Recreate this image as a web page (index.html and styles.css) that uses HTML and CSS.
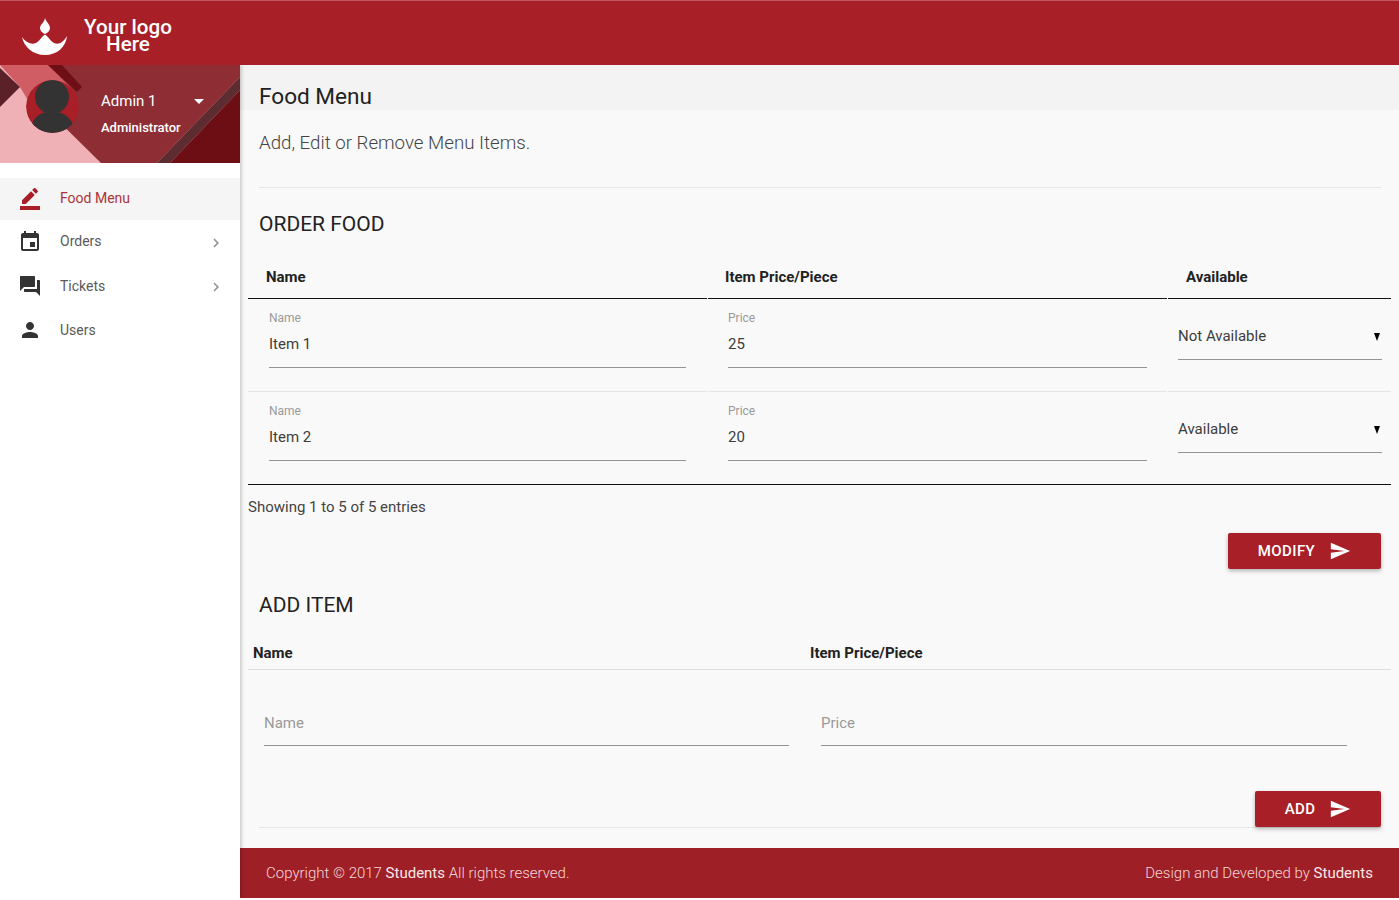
FILE: index.html
```html
<!DOCTYPE html>
<html lang="en">
<head>
<meta charset="utf-8">
<title>Food Menu</title>
<link rel="stylesheet" href="styles.css">
</head>
<body>
<div class="app">
  <header class="topbar">
    <svg class="logo-mark" viewBox="0 0 46 40" width="46" height="40" aria-hidden="true">
      <path class="logo-fill" d="M23 1.5C23 5 28 8 28 12C28 15 25.5 17 23 18C20.5 17 18 15 18 12C18 8.5 23 6 23 1.5z"/>
      <path class="logo-fill" d="M0 21C4 27 10 29 14 27C18 25 20 20 23 18.5C26 20 28 25 32 27C36 29 41 27 45 20C44 31 35 39 23 39C11 39 2 31 0 21z"/>
    </svg>
    <div class="logo-text">Your logo<br>Here</div>
  </header>
  <div class="body-row">
    <aside class="sidebar">
      <div class="profile">
        <svg class="profile-bg" viewBox="0 0 240 98" width="240" height="98" aria-hidden="true">
          <rect class="bg-pink" width="240" height="98"/>
          <polygon class="bg-dark" points="48,0 240,0 240,12 157,98 101,98 30,28"/>
          <polygon class="bg-salmon" points="0,0 48,0 70,22 34,48 26,32 20,22"/>
          <polygon class="bg-brown" points="0,3 20,22 0,42"/>
          <polygon class="bg-stripe" points="48,0 62,0 82,22 77,27"/>
          <polygon class="bg-brown2" points="240,12 157,98 170,98 240,25"/>
          <polygon class="bg-deep" points="240,25 170,98 240,98"/>
        </svg>
        <div class="avatar">
          <svg viewBox="0 0 53 53" width="53" height="53" aria-hidden="true">
            <circle class="av-bg" cx="26.5" cy="26.5" r="26.5"/>
            <ellipse class="av-fg" cx="26" cy="17" rx="17" ry="17"/>
            <path class="av-fg" d="M6 44C9 36 17 31 26 31S43 36 47 44C42 50 34 53 26 53S11 50 6 44z"/>
          </svg>
        </div>
        <div class="who">
          <div class="who-name"><span>Admin 1</span><span class="caret"></span></div>
          <div class="who-role">Administrator</div>
        </div>
      </div>
      <nav class="nav">
        <a class="nav-item active">
          <svg class="ico" viewBox="0 0 24 24"><path d="M22 24H2v-4h20v4zM13.06 5.19l3.75 3.75L7.75 18H4v-3.75l9.06-9.06zm4.82 2.68-3.75-3.75 1.83-1.83c.39-.39 1.02-.39 1.41 0l2.34 2.34c.39.39.39 1.02 0 1.41l-1.83 1.83z"/></svg>
          <span>Food Menu</span>
        </a>
        <a class="nav-item">
          <svg class="ico" viewBox="0 0 24 24"><path d="M17 12h-5v5h5v-5zM16 1v2H8V1H6v2H5c-1.11 0-1.99.9-1.99 2L3 19c0 1.1.89 2 2 2h14c1.1 0 2-.9 2-2V5c0-1.1-.9-2-2-2h-1V1h-2zm3 18H5V8h14v11z"/></svg>
          <span>Orders</span>
          <svg class="chev" viewBox="0 0 24 24"><path d="M10 6L8.59 7.41 13.17 12l-4.58 4.59L10 18l6-6z"/></svg>
        </a>
        <a class="nav-item">
          <svg class="ico" viewBox="0 0 24 24"><path d="M21 6h-2v9H6v2c0 .55.45 1 1 1h11l4 4V7c0-.55-.45-1-1-1zm-4 6V3c0-.55-.45-1-1-1H3c-.55 0-1 .45-1 1v14l4-4h10c.55 0 1-.45 1-1z"/></svg>
          <span>Tickets</span>
          <svg class="chev" viewBox="0 0 24 24"><path d="M10 6L8.59 7.41 13.17 12l-4.58 4.59L10 18l6-6z"/></svg>
        </a>
        <a class="nav-item">
          <svg class="ico" viewBox="0 0 24 24"><path d="M12 12c2.21 0 4-1.79 4-4s-1.79-4-4-4-4 1.79-4 4 1.79 4 4 4zm0 2c-2.67 0-8 1.34-8 4v2h16v-2c0-2.66-5.33-4-8-4z"/></svg>
          <span>Users</span>
        </a>
      </nav>
    </aside>
    <main class="main">
      <div class="page-title">Food Menu</div>
      <div class="content">
        <p class="subtitle">Add, Edit or Remove Menu Items.</p>
        <h2 class="section-title first">ORDER FOOD</h2>

        <div class="order-table">
          <div class="th col-a">Name</div>
          <div class="th col-b">Item Price/Piece</div>
          <div class="th col-c">Available</div>

          <div class="td">
            <div class="field field-wide"><label>Name</label><div class="val">Item 1</div></div>
          </div>
          <div class="td">
            <div class="field field-mid"><label>Price</label><div class="val">25</div></div>
          </div>
          <div class="td">
            <div class="pick"><span>Not Available</span><span class="tri"></span></div>
          </div>

          <div class="td last">
            <div class="field field-wide"><label>Name</label><div class="val">Item 2</div></div>
          </div>
          <div class="td last">
            <div class="field field-mid"><label>Price</label><div class="val">20</div></div>
          </div>
          <div class="td last">
            <div class="pick"><span>Available</span><span class="tri"></span></div>
          </div>
        </div>

        <div class="entries">Showing 1 to 5 of 5 entries</div>
        <div class="actions modify-row">
          <button class="btn btn-modify">MODIFY
            <svg viewBox="0 0 24 24"><path d="M2.01 21L23 12 2.01 3 2 10l15 2-15 2z"/></svg>
          </button>
        </div>

        <h2 class="section-title second">ADD ITEM</h2>
        <div class="add-head">
          <div class="add-th">Name</div>
          <div class="add-th">Item Price/Piece</div>
        </div>
        <div class="add-row">
          <div class="ph ph-a">Name</div>
          <div class="ph ph-b">Price</div>
        </div>
        <div class="actions add-actions">
          <button class="btn btn-add">ADD
            <svg viewBox="0 0 24 24"><path d="M2.01 21L23 12 2.01 3 2 10l15 2-15 2z"/></svg>
          </button>
        </div>
      </div>
      <footer class="footer">
        <div>Copyright © 2017 <b>Students</b> All rights reserved.</div>
        <div>Design and Developed by <b>Students</b></div>
      </footer>
    </main>
  </div>
</div>
</body>
</html>
```
FILE: styles.css
```css
* { box-sizing: border-box; }
html, body { margin: 0; height: 100%; background: #fff; }
body { font-family: Roboto, "Liberation Sans", sans-serif; color: #333; overflow: hidden; }
.app { height: 898px; display: flex; flex-direction: column; }

.topbar {
  height: 65px; flex: none; background: #a81f27; border-top: 1px solid #b9585d;
  display: flex; align-items: flex-start; position: relative; z-index: 3;
}
.logo-mark { margin: 15px 0 0 22px; flex: none; }
.logo-fill { fill: #fff; }
.logo-text {
  margin: 18px 0 0 16px; width: 88px; text-align: center; color: #fff;
  font-size: 20.6px; font-weight: 500; line-height: 17px; white-space: nowrap;
}

.body-row { flex: 1; display: flex; min-height: 0; }

.sidebar {
  width: 240px; flex: none; background: #fff; box-shadow: 1px 0 4px rgba(0,0,0,.25);
  clip-path: inset(0 -8px 0 0);
  position: relative; z-index: 2;
}
.profile { height: 98px; display: flex; position: relative; overflow: hidden; }
.profile-bg { position: absolute; left: 0; top: 0; }
.bg-pink { fill: #efb1b5; }
.bg-salmon { fill: #cf5d63; }
.bg-dark { fill: #8f2d35; }
.bg-brown { fill: #5a2228; }
.bg-stripe { fill: #6e0f15; }
.bg-brown2 { fill: #5c2c31; }
.bg-deep { fill: #6c0e13; }
.avatar { position: relative; margin: 15px 0 0 26px; width: 53px; height: 53px; border-radius: 50%; overflow: hidden; }
.avatar svg { display: block; }
.av-bg { fill: #a81f27; }
.av-fg { fill: #333; }
.who { position: relative; margin-left: 22px; width: 103px; color: #fff; }
.who-name {
  margin-top: 26px; height: 20px; display: flex; justify-content: space-between; align-items: center;
  font-size: 15px; font-weight: 400; line-height: 20px;
}
.caret { width: 0; height: 0; border: 5.5px solid transparent; border-top: 5.5px solid #fff; border-bottom: 0; }
.who-role { margin-top: 9px; font-size: 13px; font-weight: 500; line-height: 16px; white-space: nowrap; }

.nav { margin-top: 15px; }
.nav-item {
  height: 44px; display: flex; align-items: center; padding: 0 15px 0 18px;
  font-size: 14px; color: #5a5a5a; position: relative;
}
.nav-item span { margin-left: 18px; flex: 1; }
.nav-item.active { height: 42px; background: #f5f5f5; color: #ad333a; }
.nav-item.active span, .nav-item:nth-child(2) span { position: relative; top: -1px; }
.nav-item.active .ico { position: relative; top: -1px; }
.ico { width: 24px; height: 24px; fill: #333; flex: none; }
.active .ico { fill: #a81f27; }
.chev { width: 18px; height: 18px; fill: #909090; flex: none; position: relative; top: 1px; }

.main { flex: 1; min-width: 0; display: flex; flex-direction: column; background: #f9f9f9; }
.page-title {
  height: 45px; flex: none; background: #f3f3f3; padding: 18px 0 0 19px;
  font-size: 22.6px; line-height: 28px; color: #222;
}
.content { flex: 1; padding: 0 8px 0 8px; position: relative; }
.subtitle {
  margin: 0 10px 0 11px; padding-top: 22px; height: 78px; border-bottom: 1px solid #e6e6e6;
  font-size: 18.7px; font-weight: 300; line-height: 22px; color: #444;
}
.section-title { margin: 0 0 0 11px; font-size: 21px; font-weight: 400; line-height: 26px; color: #222; }
.section-title.first { padding-top: 23px; height: 50px; }

.order-table { display: grid; grid-template-columns: 459px 459px 223px; column-gap: 1px; margin-top: 24px; }
.th {
  height: 37px; padding-top: 6px; border-bottom: 1px solid #111;
  font-size: 15px; font-weight: 700; line-height: 18px; color: #222;
}
.col-a { padding-left: 18px; }
.col-b { padding-left: 17px; }
.col-c { padding-left: 18px; }
.td { height: 93px; border-bottom: 1px solid #e5e5e5; }
.td.last { height: 92px; border-bottom: 0; }
.field { margin: 12px 0 0 21px; height: 57px; border-bottom: 1px solid #949494; }
.field-wide { width: 417px; }
.field-mid { width: 419px; margin-left: 20px; }
.field label { display: block; font-size: 12px; line-height: 14px; color: #9a9a9a; }
.val { margin-top: 10px; font-size: 15px; line-height: 18px; color: #3d3d3d; }
.pick {
  margin: 19px 9px 0 10px; height: 42px; padding: 9px 2px 0 0; border-bottom: 1px solid #949494;
  display: flex; justify-content: space-between; font-size: 15px; line-height: 18px; color: #3d3d3d;
}
.tri {
  width: 0; height: 0; margin-top: 6px; border-style: solid; border-color: #000 transparent transparent;
  border-width: 8px 3.5px 0;
}

.entries { border-top: 1px solid #111; padding-top: 13px; font-size: 15px; line-height: 18px; color: #444; }
.actions { display: flex; justify-content: flex-end; padding-right: 10px; }
.modify-row { margin-top: 17px; }
.btn {
  height: 36px; border: 0; border-radius: 2px; background: #a81f27; color: #fff;
  font-family: inherit; font-size: 15px; letter-spacing: .4px; font-weight: 500; display: flex; align-items: center; justify-content: center;
  gap: 14px; padding: 0; box-shadow: 0 2px 4px rgba(0,0,0,.28);
}
.btn svg { width: 22px; height: 22px; fill: #fff; flex: none; }
.btn-modify { width: 153px; }
.btn-add { width: 126px; position: relative; z-index: 1; }

.section-title.second { margin-top: 23px; height: 26px; }
.add-head { display: grid; grid-template-columns: 557px 1fr; height: 34px; margin-top: 18px; padding: 0 0 0 5px; border-bottom: 1px solid #ddd; width: 1143px; }
.add-th { font-size: 15px; font-weight: 700; line-height: 18px; padding-top: 8px; color: #222; }
.add-row { display: flex; margin-top: 42px; padding-left: 16px; width: 1143px; }
.ph { height: 34px; border-bottom: 1px solid #949494; font-size: 15px; line-height: 18px; color: #999; padding-top: 2px; }
.ph-a { width: 525px; }
.ph-b { width: 526px; margin-left: 32px; }
.add-actions { margin: 45px 10px 0 11px; height: 37px; border-bottom: 1px solid #e6e6e6; padding-right: 0; }

.footer {
  height: 50px; flex: none; background: #9f1f27; display: flex; justify-content: space-between; align-items: center;
  padding: 0 26px; font-size: 15px; font-weight: 300; color: #f3d6d8;
}
.footer b { font-weight: 400; color: #f8e6e7; }
```
